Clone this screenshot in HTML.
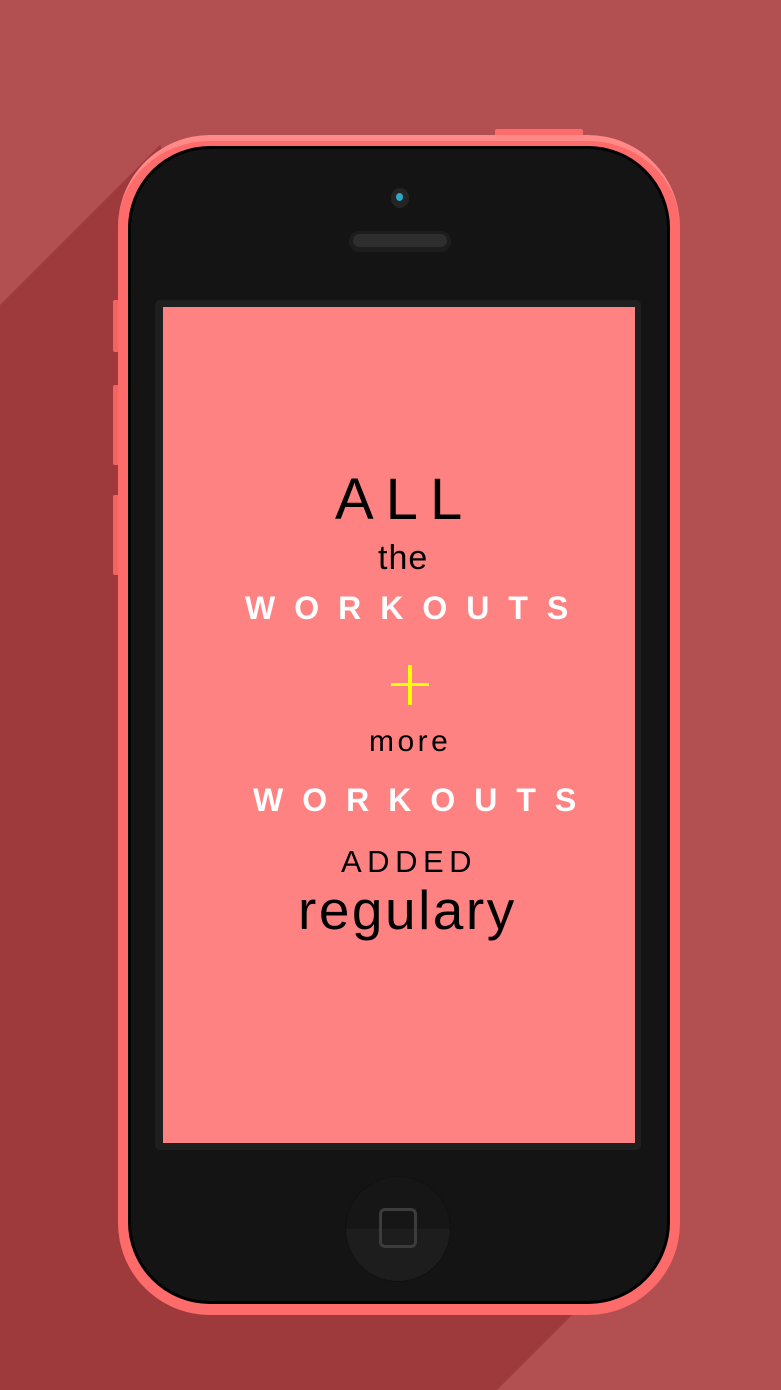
<!DOCTYPE html>
<html><head><meta charset="utf-8"><style>
*{margin:0;padding:0;box-sizing:border-box}
body{width:781px;height:1390px;overflow:hidden;background:#b24f50;position:relative;font-family:"Liberation Sans",sans-serif}
.abs{position:absolute}
.t{position:absolute;white-space:nowrap;line-height:1}
</style></head><body>
<svg class="abs" style="left:0;top:0" width="781" height="1390"><polygon points="0,305 160,145 680,1207 497,1390 0,1390" fill="#9e3a3c"/></svg>
<div class="abs" style="left:113px;top:300px;width:8px;height:52px;background:#f26362;border-radius:2px"></div>
<div class="abs" style="left:113px;top:385px;width:8px;height:80px;background:#f26362;border-radius:2px"></div>
<div class="abs" style="left:113px;top:495px;width:8px;height:80px;background:#f26362;border-radius:2px"></div>
<div class="abs" style="left:495px;top:129px;width:88px;height:10px;background:#fd6b6a;border-radius:2px"></div>
<div class="abs" style="left:118px;top:135px;width:562px;height:1180px;background:#fd6b6a;border-radius:92px;border-top:6px solid #ff8a88"></div>
<div class="abs" style="left:128px;top:146px;width:542px;height:1158px;background:#141414;border-radius:82px;border:3px solid #000"></div>
<div class="abs" style="left:391px;top:188px;width:18px;height:20px;border-radius:50%;background:#242424"></div>
<div class="abs" style="left:396px;top:193px;width:7px;height:8px;border-radius:50%;background:#2aa7c9"></div>
<div class="abs" style="left:349px;top:231px;width:102px;height:21px;border-radius:10px;background:#1d1d1d"></div>
<div class="abs" style="left:353px;top:234px;width:94px;height:13px;border-radius:7px;background:#2e2e2e"></div>
<div class="abs" style="left:155px;top:300px;width:486px;height:850px;background:#1f1f1f;border-radius:5px"></div>
<div class="abs" style="left:163px;top:307px;width:472px;height:836px;background:#ff8282"></div>
<div class="abs" style="left:345px;top:1176px;width:106px;height:106px;border-radius:50%;background:linear-gradient(#161616 0 50%,#1d1d1d 50%);border:1px solid #111"></div>
<div class="abs" style="left:379px;top:1208px;width:38px;height:40px;border:3px solid #3c3c3c;border-radius:6px"></div>
<div class="t" style="left:335px;top:471px;font-size:58px;letter-spacing:12px;color:#000">ALL</div>
<div class="t" style="left:378px;top:541px;font-size:34px;letter-spacing:1px;color:#000">the</div>
<div class="t" style="left:245px;top:592px;font-size:32px;font-weight:bold;letter-spacing:19px;color:#fff">WORKOUTS</div>
<div class="abs" style="left:408px;top:665px;width:4px;height:40px;background:#ffff00"></div>
<div class="abs" style="left:391px;top:683px;width:38px;height:3px;background:#ffff00"></div>
<div class="t" style="left:369px;top:727px;font-size:30px;letter-spacing:3.5px;color:#000">more</div>
<div class="t" style="left:253px;top:784px;font-size:32px;font-weight:bold;letter-spacing:19px;color:#fff">WORKOUTS</div>
<div class="t" style="left:341px;top:846px;font-size:31px;letter-spacing:5.5px;color:#000">ADDED</div>
<div class="t" style="left:298px;top:883px;font-size:55px;letter-spacing:2.5px;color:#000">regulary</div>
</body></html>
